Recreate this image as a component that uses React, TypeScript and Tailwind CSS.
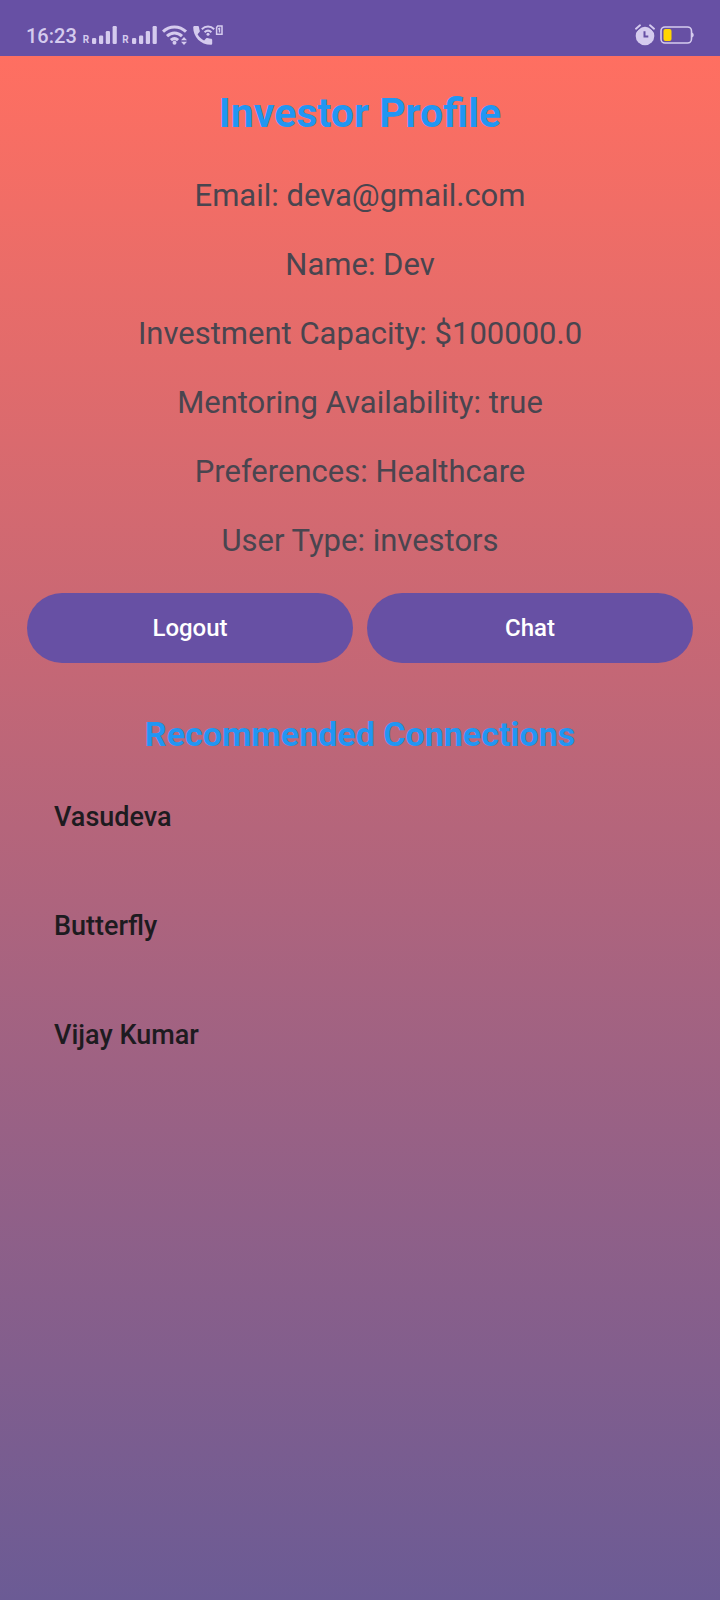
const details = [
  { label: "Email", value: "deva@gmail.com" },
  { label: "Name", value: "Dev" },
  { label: "Investment Capacity", value: "$100000.0" },
  { label: "Mentoring Availability", value: "true" },
  { label: "Preferences", value: "Healthcare" },
  { label: "User Type", value: "investors" },
];

const connections = ["Vasudeva", "Butterfly", "Vijay Kumar"];

function Signal() {
  return (
    <div className="flex items-end gap-[3px]">
      <span className="text-[10px] leading-[9px] font-bold">R</span>
      <svg width="25" height="18" viewBox="0 0 25 18" fill="currentColor" aria-hidden="true">
        <rect x="0" y="12" width="4.200" height="6" rx="1.200" />
        <rect x="7" y="9.500" width="4.200" height="8.500" rx="1.200" />
        <rect x="13.800" y="5" width="4.200" height="13" rx="1.200" />
        <rect x="20.600" y="0" width="4.200" height="18" rx="1.200" />
      </svg>
    </div>
  );
}

function Wifi() {
  return (
    <svg width="26" height="20" viewBox="0 0 26 20" fill="none" stroke="currentColor" strokeWidth="3" aria-hidden="true">
      <path d="M1 6.600C7.500.3 17.500.3 24 6.600" />
      <path d="M5 11.200c4.500-4.300 10.500-4.300 15 0" />
      <path d="M8.900 15.200c2.300-2.100 4.900-2.100 7.200 0" />
      <circle cx="12.500" cy="17.800" r="2" fill="currentColor" stroke="none" />
      <path d="M22 12l3 3.300h-6zM22 20l3-3.300h-6z" fill="currentColor" stroke="none" />
    </svg>
  );
}

function WifiCall() {
  return (
    <svg width="31" height="20" viewBox="0 0 31 20" aria-hidden="true">
      <path
        d="M1.500 1h3.200c.7 0 1.200.5 1.300 1.200.1 1.300.4 2.400.8 3.500.2.500 0 1-.3 1.300L4.600 9.200c1.500 2.700 3.500 4.700 6.500 6.200l2.100-2.100c.4-.4.9-.5 1.400-.3 1.100.4 2.200.7 3.400.8.700 0 1.200.6 1.200 1.300v3.400c0 .7-.6 1.300-1.300 1.300C7.600 19.800.2 12 .2 2.300.2 1.600.8 1 1.500 1z"
        fill="currentColor"
      />
      <g fill="none" stroke="currentColor" strokeWidth="2">
        <path d="M8.800 4.200c3.700-3.600 8.700-3.600 12.400 0" />
        <path d="M11.600 7.200c2-1.900 4.800-1.900 6.800 0" />
      </g>
      <circle cx="15" cy="9.200" r="1.500" fill="currentColor" />
      <path d="M24.700 1H29v8.200h-5.400V2.500z" fill="none" stroke="currentColor" strokeWidth="1.500" />
      <path d="M25.200 4.200l1.300-.8V7.600" fill="none" stroke="currentColor" strokeWidth="1.400" />
    </svg>
  );
}

function Alarm() {
  return (
    <svg width="20" height="22" viewBox="0 0 20 22" aria-hidden="true">
      <circle cx="10" cy="12" r="9.300" fill="currentColor" />
      <path d="M1 5L5 1.500M19 5l-4-3.500" stroke="#6750a4" strokeWidth="4.500" strokeLinecap="round" />
      <path d="M1 4.700L5 1.300M19 4.700l-4-3.400" stroke="currentColor" strokeWidth="1.900" strokeLinecap="round" />
      <path d="M9.500 7.300v5.300h3.800" fill="none" stroke="#6750a4" strokeWidth="2" />
    </svg>
  );
}

function Battery() {
  return (
    <svg width="34" height="18" viewBox="0 0 34 18" aria-hidden="true">
      <rect x="1" y="1" width="30.500" height="16" rx="4" fill="none" stroke="currentColor" strokeWidth="1.600" />
      <path d="M32 6.500c2.300.8 2.300 4.200 0 5z" fill="currentColor" />
      <rect x="3.500" y="3" width="8" height="12" rx="2" fill="#ffd600" />
    </svg>
  );
}

export default function App() {
  return (
    <div className="flex min-h-screen flex-col bg-[#6750a4] font-['Roboto',sans-serif]">
      <header className="flex h-14 items-end justify-between px-[26px] pb-2 text-[#d5cbee]">
        <div className="flex items-center gap-[6px]">
          <time className="text-[20px] leading-6 font-medium">16:23</time>
          <div className="flex items-center gap-[5px] pb-[2px]">
            <Signal />
            <Signal />
            <Wifi />
            <WifiCall />
          </div>
        </div>
        <div className="flex h-6 items-center gap-[5px] pb-[2px]">
          <Alarm />
          <Battery />
        </div>
      </header>

      <main className="flex flex-1 flex-col bg-linear-to-b/srgb from-[#ff6f61] to-[#6b5b95] px-[27px] pt-[31px]">
        <h1 className="text-center text-[41px] leading-[52px] font-bold text-[#2196f3]">Investor Profile</h1>

        <dl className="mt-[22px] text-center text-[31px] leading-[69px] text-[#49454f]">
          {details.map(({ label, value }) => (
            <div key={label}>
              <dt className="inline">{label}: </dt>
              <dd className="inline">{value}</dd>
            </div>
          ))}
        </dl>

        <div className="mt-[18px] grid grid-cols-2 gap-[14px] text-[24px] font-medium text-white">
          <button type="button" className="h-[70px] rounded-full bg-[#6750a4]">Logout</button>
          <button type="button" className="h-[70px] rounded-full bg-[#6750a4]">Chat</button>
        </div>

        <h2 className="mt-[49px] text-center text-[34px] leading-[44px] font-bold text-[#2196f3]">
          Recommended Connections
        </h2>

        <ul className="mt-[7px] px-[27px] text-[27px] leading-[109px] font-medium text-[#1d1b20]">
          {connections.map((name) => (
            <li key={name}>{name}</li>
          ))}
        </ul>
      </main>
    </div>
  );
}
